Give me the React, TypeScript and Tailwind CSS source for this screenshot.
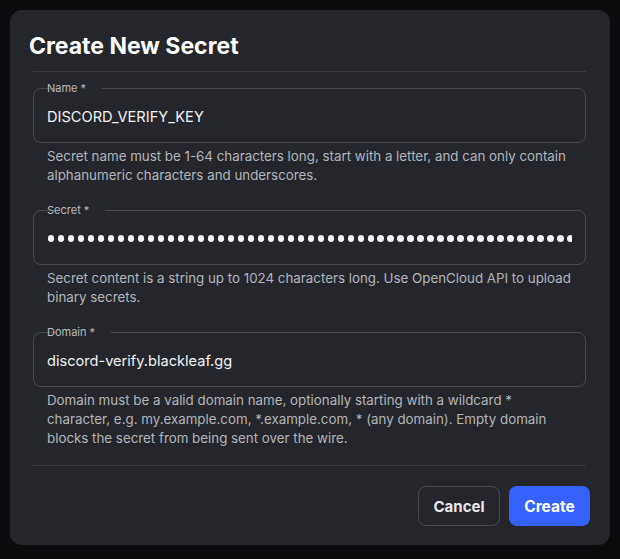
import React from "react";

const font = { fontFamily: "Inter, 'Noto Sans', sans-serif" };

function Field({ label, children }: { label: string; children: React.ReactNode }) {
  return (
    <fieldset className="min-w-0 rounded-[8px] border border-[#4a4b51] px-[13px] pb-[7px]">
      <legend className="ml-[10px] px-[3px] -translate-x-[13px] text-[11px] leading-[14px] text-[#b9babf]">
        {label}
      </legend>
      {children}
    </fieldset>
  );
}

function TextValue({ value }: { value: string }) {
  return (
    <input
      readOnly
      type="text"
      value={value}
      className="block h-[40px] w-full bg-transparent pt-[3px] text-[14.6px] text-[#f2f3f5] outline-none"
      style={font}
    />
  );
}

function Dots() {
  const dots = Array.from({ length: 60 });
  return (
    <div className="flex h-[40px] w-full min-w-0 items-center overflow-hidden pt-[3px] pl-[1px]">
      <div className="flex shrink-0 gap-[3.6px]">
        {dots.map((_, i) => (
          <span key={i} className="block h-[6.4px] w-[6.4px] shrink-0 rounded-full bg-[#f2f3f5]" />
        ))}
      </div>
    </div>
  );
}

function Helper({ children }: { children: React.ReactNode }) {
  return (
    <p className="mt-[4px] px-[14px] text-[13.33px] leading-[19px] text-[#b3b5bb]">{children}</p>
  );
}

export default function App() {
  return (
    <div className="min-h-[559px] w-[620px] bg-[#0b0c0e] p-[10px]" style={font}>
      <div className="w-[600px] rounded-[12px] bg-[#25262b] pb-[19px]">
        <h1 className="pl-[19px] pt-[21px] text-[23px] font-bold leading-[30px] text-white">
          Create New Secret
        </h1>
        <div className="mx-[23px] mr-[24px] mt-[10px] h-px bg-[#393a40]" />
        <div className="mt-[9px] pl-[23px] pr-[24px]">
          <Field label="Name *">
            <TextValue value="DISCORD_VERIFY_KEY" />
          </Field>
          <Helper>
            Secret name must be 1-64 characters long, start with a letter, and can only contain
            alphanumeric characters and underscores.
          </Helper>
          <div className="h-[18px]" />
          <Field label="Secret *">
            <Dots />
          </Field>
          <Helper>
            Secret content is a string up to 1024 characters long. Use OpenCloud API to upload
            binary secrets.
          </Helper>
          <div className="h-[18px]" />
          <Field label="Domain *">
            <TextValue value="discord-verify.blackleaf.gg" />
          </Field>
          <Helper>
            Domain must be a valid domain name, optionally starting with a wildcard *
            character, e.g. my.example.com, *.example.com, * (any domain). Empty domain
            blocks the secret from being sent over the wire.
          </Helper>
        </div>
        <div className="mx-[23px] mr-[24px] mt-[17px] h-px bg-[#393a40]" />
        <div className="mt-[20px] flex justify-end gap-[9px] pr-[20px]">
          <button className="h-[40px] w-[82px] rounded-[8px] border border-[#4a4b51] pt-[2px] text-[15px] font-bold text-[#e8e9eb]">
            Cancel
          </button>
          <button className="h-[40px] w-[81px] rounded-[8px] bg-[#3562ff] pt-[2px] text-[15.5px] font-bold text-white">
            Create
          </button>
        </div>
      </div>
    </div>
  );
}
